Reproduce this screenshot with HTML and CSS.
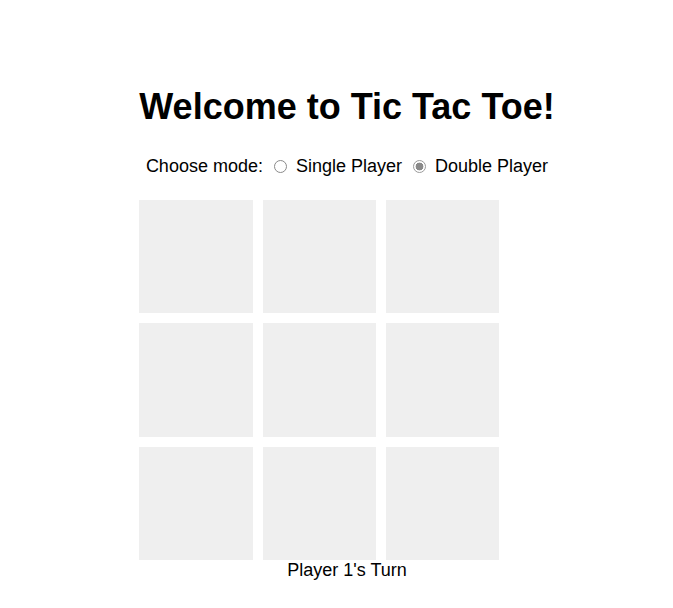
FILE: index.html
```html
<!DOCTYPE html>
<html>
<head>
<meta charset="utf-8">
<title>Tic Tac Toe</title>
<link rel="stylesheet" href="styles.css">
</head>
<body>
<div class="app">
  <h1 class="title">Welcome to Tic Tac Toe!</h1>
  <div class="mode">
    Choose mode:
    <label class="opt"><input type="radio" name="mode" class="radio"> Single Player</label>
    <label class="opt"><input type="radio" name="mode" class="radio" checked> Double Player</label>
  </div>
  <div class="board">
    <div class="cell"></div><div class="cell"></div><div class="cell"></div>
    <div class="cell"></div><div class="cell"></div><div class="cell"></div>
    <div class="cell"></div><div class="cell"></div><div class="cell"></div>
  </div>
  <div class="status">Player 1's Turn</div>
</div>
</body>
</html>
```
FILE: styles.css
```css
html, body {
  margin: 0;
  padding: 0;
  background: #fff;
}
body {
  font-family: "Liberation Sans", Arial, sans-serif;
  color: #000;
  display: flex;
  justify-content: center;
  padding: 62px 0 0 21px;
}
.app {
  width: fit-content;
  text-align: center;
}
.title {
  font-size: 36px;
  font-weight: bold;
  margin: 24px 0 0;
  line-height: 41px;
}
.mode {
  font-size: 18px;
  line-height: 21px;
  margin: 29px 0 23px;
}
.opt {
  display: inline;
}
.radio {
  appearance: none;
  -webkit-appearance: none;
  width: 13px;
  height: 13px;
  margin: 0 4px 0 6px;
  border: 1px solid #8a8a8a;
  border-radius: 50%;
  background: #fff;
  vertical-align: -1px;
  box-sizing: border-box;
}
.radio:checked {
  border-color: #9a9a9a;
  background: radial-gradient(circle, #8a8a8a 0 3.6px, #fff 4.2px);
}
.board {
  display: grid;
  grid-template-columns: repeat(3, 1fr);
  grid-template-rows: repeat(3, 1fr);
  gap: 10px;
  width: 360px;
  height: 360px;
}
.cell {
  background: #efefef;
}
.status {
  font-size: 18px;
  line-height: 21px;
}
```
